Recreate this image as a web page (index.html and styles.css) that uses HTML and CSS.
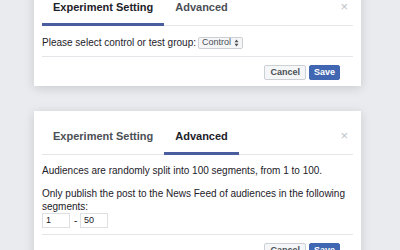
FILE: index.html
```html
<!DOCTYPE html>
<html lang="en">
<head>
    <meta charset="UTF-8">
    <title>Experiment Settings</title>
    <link rel="stylesheet" href="styles.css">
</head>
<body>
    <div class="page">
        <div class="dialog first">
            <div class="dialog-header">
                <div class="tab active">Experiment Setting</div>
                <div class="tab">Advanced</div>
                <span class="close">&times;</span>
            </div>
            <div class="dialog-body">
                <div class="group-row">
                    <span>Please select control or test group:</span>
                    <div class="select">
                        Control
                        <svg viewBox="0 0 6 10" width="5" height="8">
                            <path d="M3 0.5 L5.5 4 L0.5 4 Z M3 9.5 L5.5 6 L0.5 6 Z" fill="#4b4f56" />
                        </svg>
                    </div>
                </div>
            </div>
            <div class="dialog-footer">
                <button class="btn">Cancel</button>
                <button class="btn primary">Save</button>
            </div>
        </div>

        <div class="dialog">
            <div class="dialog-header">
                <div class="tab">Experiment Setting</div>
                <div class="tab active">Advanced</div>
                <span class="close">&times;</span>
            </div>
            <div class="dialog-body">
                <p class="note">Audiences are randomly split into 100 segments, from 1 to 100.</p>
                <p>Only publish the post to the News Feed of audiences in the following segments:</p>
                <div class="range">
                    <div class="field">1</div>
                    <span class="dash">-</span>
                    <div class="field">50</div>
                </div>
            </div>
            <div class="dialog-footer">
                <button class="btn">Cancel</button>
                <button class="btn primary">Save</button>
            </div>
        </div>
    </div>
</body>
</html>
```

FILE: styles.css
```css
:root {
    --fb-blue: #4267b2;
    --tab-line: #4a5d9e;
    --text-color: #1d2129;
    --muted: #4b4f56;
    --border-color: #dddfe2;
}

* {
    margin: 0;
    padding: 0;
    box-sizing: border-box;
}

body {
    font-family: "Liberation Sans", Arial, sans-serif;
    font-size: 10px;
    line-height: 13px;
    color: var(--text-color);
    background-color: #e9ebee;
    overflow: hidden;
}

.page {
    display: flex;
    flex-direction: column;
    gap: 25px;
    padding-left: 34px;
    margin-top: -18px;
}

.dialog {
    width: 327px;
    background: white;
    padding: 0 8px;
    box-shadow: 0 2px 10px rgba(0, 0, 0, 0.14);
}

.dialog-header {
    display: flex;
    align-items: flex-end;
    border-bottom: 1px solid #e5e6e9;
}

.tab {
    padding: 18px 11px 9px;
    font-size: 11px;
    line-height: 14px;
    font-weight: bold;
    color: var(--muted);
    border-bottom: 3px solid transparent;
    margin-bottom: -1px;
}

.tab.active {
    color: var(--text-color);
    border-bottom-color: var(--tab-line);
}

.close {
    margin-left: auto;
    align-self: flex-start;
    padding: 18px 5px 0 0;
    font-size: 13px;
    line-height: 14px;
    color: #bec3c9;
}

.dialog-body {
    padding: 10px 0 7px;
}

.group-row {
    display: flex;
    align-items: center;
    height: 13px;
}

.select {
    display: flex;
    align-items: center;
    gap: 3px;
    height: 12px;
    margin-left: 2px;
    padding: 0 3px 0 3px;
    border: 1px solid #ccd0d5;
    border-radius: 2px;
    background: #f5f6f7;
    font-size: 9px;
    color: var(--muted);
}

.note {
    margin-bottom: 10px;
}

.dialog.first + .dialog .dialog-body {
    padding: 9px 0 6px;
}

.range {
    display: flex;
    align-items: center;
    gap: 4px;
}

.field {
    width: 28px;
    height: 15px;
    padding: 0 3px;
    border: 1px solid #dddfe2;
    font-size: 9px;
    line-height: 13px;
}

.dash {
    width: 2px;
}

.dialog-footer {
    display: flex;
    justify-content: flex-end;
    gap: 3px;
    padding: 8px 13px 6px 0;
    border-top: 1px solid #e5e6e9;
}

.btn {
    height: 15px;
    padding: 0 5px;
    font-family: inherit;
    font-size: 9px;
    font-weight: bold;
    line-height: 13px;
    color: var(--muted);
    background: #f5f6f7;
    border: 1px solid #ccd0d5;
    border-radius: 2px;
}

.btn.primary {
    padding: 0 4px;
    color: white;
    background: var(--fb-blue);
    border-color: var(--fb-blue);
}
```
